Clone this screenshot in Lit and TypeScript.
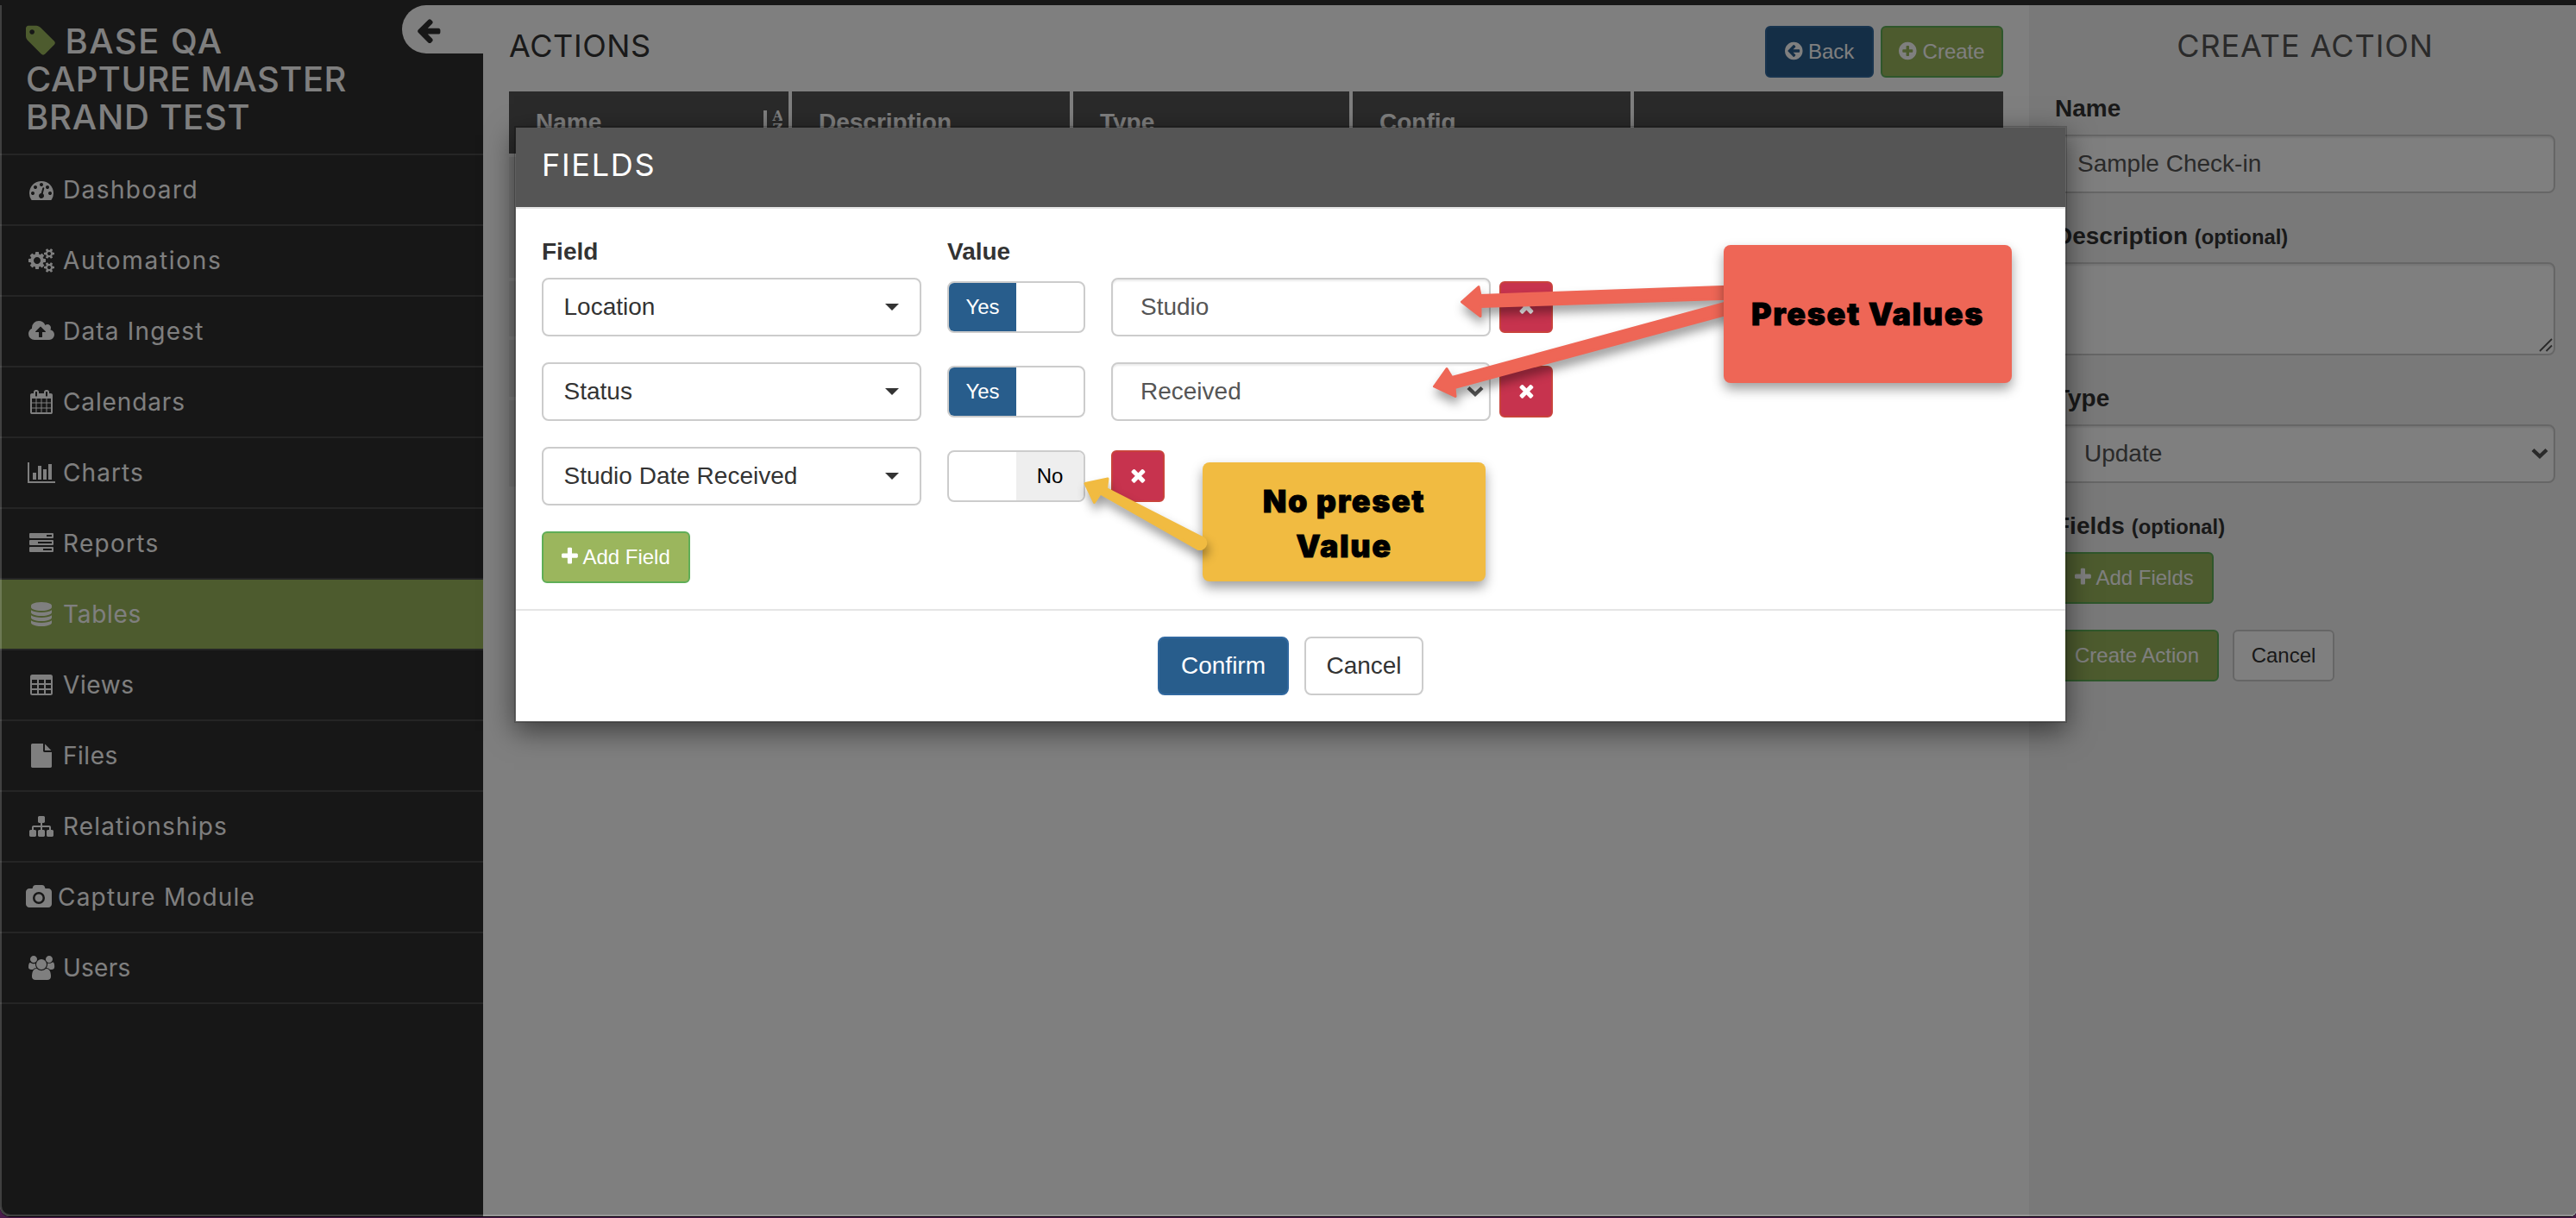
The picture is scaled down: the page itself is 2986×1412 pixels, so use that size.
import { LitElement, html, svg, css, nothing } from 'lit'
import { customElement, property } from 'lit/decorators.js';
import { classMap } from 'lit/directives/class-map.js';

interface Glyph {
  /** left edge and width of the glyph box, height is always 1792 */
  x: number;
  w: number;
  d: string;
}

const GLYPHS: Record<string, Glyph> = {
  tag: { x: 128, w: 1536, d: 'M576 448q0-53-37.5-90.5t-90.5-37.5-90.5 37.5-37.5 90.5 37.5 90.5 90.5 37.5 90.5-37.5 37.5-90.5zm1067 576q0 53-37 90l-491 492q-39 37-91 37-53 0-90-37l-715-716q-38-37-64.5-101t-26.5-117v-416q0-52 38-90t90-38h416q53 0 117 26.5t102 64.5l715 714q37 39 37 91z' },
  dashboard: { x: 0, w: 1792, d: 'M384 1152q0-53-37.5-90.5t-90.5-37.5-90.5 37.5-37.5 90.5 37.5 90.5 90.5 37.5 90.5-37.5 37.5-90.5zm192-448q0-53-37.5-90.5t-90.5-37.5-90.5 37.5-37.5 90.5 37.5 90.5 90.5 37.5 90.5-37.5 37.5-90.5zm428 481l101-382q6-26-7.5-48.5t-38.5-29.5-48 6.5-30 39.5l-101 382q-60 5-107 43.5t-63 98.5q-20 77 20 146t117 89 146-20 89-117q16-60-6-117t-72-91zm660-33q0-53-37.5-90.5t-90.5-37.5-90.5 37.5-37.5 90.5 37.5 90.5 90.5 37.5 90.5-37.5 37.5-90.5zm-640-640q0-53-37.5-90.5t-90.5-37.5-90.5 37.5-37.5 90.5 37.5 90.5 90.5 37.5 90.5-37.5 37.5-90.5zm448 192q0-53-37.5-90.5t-90.5-37.5-90.5 37.5-37.5 90.5 37.5 90.5 90.5 37.5 90.5-37.5 37.5-90.5zm320 448q0 261-141 483-19 29-54 29h-1402q-35 0-54-29-141-221-141-483 0-182 71-348t191-286 286-191 348-71 348 71 286 191 191 286 71 348z' },
  cogs: { x: 0, w: 1920, d: 'M896 896q0-106-75-181t-181-75-181 75-75 181 75 181 181 75 181-75 75-181zm768 512q0-52-38-90t-90-38-90 38-38 90q0 53 37.5 90.5t90.5 37.5 90.5-37.5 37.5-90.5zm0-1024q0-52-38-90t-90-38-90 38-38 90q0 53 37.5 90.5t90.5 37.5 90.5-37.5 37.5-90.5zm-384 421v185q0 10-7 19.5t-16 10.5l-155 24q-11 35-32 76 34 48 90 115 7 11 7 20 0 12-7 19-23 30-82.5 89.5t-78.5 59.5q-11 0-21-7l-115-90q-37 19-77 31-11 108-23 155-7 24-30 24h-186q-11 0-20-7.5t-10-17.5l-23-153q-34-10-75-31l-118 89q-7 7-20 7-11 0-21-8-144-133-144-160 0-9 7-19 10-14 41-53t47-61q-23-44-35-82l-152-24q-10-1-17-9.5t-7-19.5v-185q0-10 7-19.5t16-10.5l155-24q11-35 32-76-34-48-90-115-7-11-7-20 0-12 7-20 22-30 82-89t79-59q11 0 21 7l115 90q34-18 77-32 11-108 23-154 7-24 30-24h186q11 0 20 7.5t10 17.5l23 153q34 10 75 31l118-89q8-7 20-7 11 0 21 8 144 133 144 160 0 8-7 19-12 16-42 54t-45 60q23 48 34 82l152 23q10 2 17 10.5t7 19.5zm640 533v140q0 16-149 31-12 27-30 52 51 113 51 138 0 4-4 7-122 71-124 71-8 0-46-47t-52-68q-20 2-30 2t-30-2q-14 21-52 68t-46 47q-2 0-124-71-4-3-4-7 0-25 51-138-18-25-30-52-149-15-149-31v-140q0-16 149-31 13-29 30-52-51-113-51-138 0-4 4-7 4-2 35-20t59-34 30-16q8 0 46 46.5t52 67.5q20-2 30-2t30 2q51-71 92-112l6-2q4 0 124 70 4 3 4 7 0 25-51 138 17 23 30 52 149 15 149 31zm0-1024v140q0 16-149 31-12 27-30 52 51 113 51 138 0 4-4 7-122 71-124 71-8 0-46-47t-52-68q-20 2-30 2t-30-2q-14 21-52 68t-46 47q-2 0-124-71-4-3-4-7 0-25 51-138-18-25-30-52-149-15-149-31v-140q0-16 149-31 13-29 30-52-51-113-51-138 0-4 4-7 4-2 35-20t59-34 30-16q8 0 46 46.5t52 67.5q20-2 30-2t30 2q51-71 92-112l6-2q4 0 124 70 4 3 4 7 0 25-51 138 17 23 30 52 149 15 149 31z' },
  cloud: { x: 0, w: 1920, d: 'M1280 928q0-14-9-23l-352-352q-9-9-23-9t-23 9l-351 351q-10 12-10 24 0 14 9 23t23 9h224v352q0 13 9.5 22.5t22.5 9.5h192q13 0 22.5-9.5t9.5-22.5v-352h224q13 0 22.5-9.5t9.5-22.5zm640 224q0 159-112.5 271.5t-271.5 112.5h-1088q-185 0-316.5-131.5t-131.5-316.5q0-130 70-240t188-165q-2-30-2-43 0-212 150-362t362-150q156 0 285.5 87t188.5 231q71-62 166-62 106 0 181 75t75 181q0 76-41 138 130 31 213.5 135.5t83.5 238.5z' },
  calendar: { x: 64, w: 1664, d: 'M192 1664h288v-288h-288v288zm352 0h320v-288h-320v288zm-352-352h288v-320h-288v320zm352 0h320v-320h-320v320zm-352-384h288v-288h-288v288zm736 736h320v-288h-320v288zm-384-736h320v-288h-320v288zm768 736h288v-288h-288v288zm-384-352h320v-320h-320v320zm-352-864v-288q0-13-9.5-22.5t-22.5-9.5h-64q-13 0-22.5 9.5t-9.5 22.5v288q0 13 9.5 22.5t22.5 9.5h64q13 0 22.5-9.5t9.5-22.5zm736 864h288v-320h-288v320zm-384-384h320v-288h-320v288zm384 0h288v-288h-288v288zm32-480v-288q0-13-9.5-22.5t-22.5-9.5h-64q-13 0-22.5 9.5t-9.5 22.5v288q0 13 9.5 22.5t22.5 9.5h64q13 0 22.5-9.5t9.5-22.5zm384-64v1280q0 52-38 90t-90 38h-1408q-52 0-90-38t-38-90v-1280q0-52 38-90t90-38h128v-96q0-66 47-113t113-47h64q66 0 113 47t47 113v96h384v-96q0-66 47-113t113-47h64q66 0 113 47t47 113v96h128q52 0 90 38t38 90z' },
  chart: { x: 0, w: 2048, d: 'M640 896v512h-256v-512h256zm384-512v1024h-256v-1024h256zm1024 1152v128h-2048v-1536h128v1408h1920zm-640-896v768h-256v-768h256zm384-384v1152h-256v-1152h256z' },
  tasks: { x: 0, w: 1792, d: 'M1280 384h384v-128h-384zM640 896h1024v-128h-1024zM1024 1408h640v-128h-640zM64 128h1664q64 0 64 64v256q0 64-64 64h-1664q-64 0-64-64v-256q0-64 64-64zM64 640h1664q64 0 64 64v256q0 64-64 64h-1664q-64 0-64-64v-256q0-64 64-64zM64 1152h1664q64 0 64 64v256q0 64-64 64h-1664q-64 0-64-64v-256q0-64 64-64z' },
  database: { x: 128, w: 1536, d: 'M896 768q237 0 443-43t325-127v170q0 69-103 128t-280 93.5-385 34.5-385-34.5-280-93.5-103-128v-170q119 84 325 127t443 43zm0 768q237 0 443-43t325-127v170q0 69-103 128t-280 93.5-385 34.5-385-34.5-280-93.5-103-128v-170q119 84 325 127t443 43zm0-384q237 0 443-43t325-127v170q0 69-103 128t-280 93.5-385 34.5-385-34.5-280-93.5-103-128v-170q119 84 325 127t443 43zm0-1152q208 0 385 34.5t280 93.5 103 128v128q0 69-103 128t-280 93.5-385 34.5-385-34.5-280-93.5-103-128v-128q0-69 103-128t280-93.5 385-34.5z' },
  table: { x: 64, w: 1664, d: 'M192 512h384v256h-384zM704 512h384v256h-384zM1216 512h384v256h-384zM192 896h384v256h-384zM704 896h384v256h-384zM1216 896h384v256h-384zM192 1280h384v256h-384zM704 1280h384v256h-384zM1216 1280h384v256h-384zM224 128h1344q160 0 160 160v1216q0 160-160 160h-1344q-160 0-160-160v-1216q0-160 160-160z' },
  file: { x: 128, w: 1536, d: 'M1152 512v-472q22 14 36 28l408 408q14 14 28 36h-472zm-128 32q0 40 28 68t68 28h544v1056q0 40-28 68t-68 28h-1344q-40 0-68-28t-28-68v-1600q0-40 28-68t68-28h800v544z' },
  sitemap: { x: 0, w: 1792, d: 'M1792 1248v320q0 40-28 68t-68 28h-320q-40 0-68-28t-28-68v-320q0-40 28-68t68-28h96v-192h-512v192h96q40 0 68 28t28 68v320q0 40-28 68t-68 28h-320q-40 0-68-28t-28-68v-320q0-40 28-68t68-28h96v-192h-512v192h96q40 0 68 28t28 68v320q0 40-28 68t-68 28h-320q-40 0-68-28t-28-68v-320q0-40 28-68t68-28h96v-192q0-52 38-90t90-38h512v-192h-96q-40 0-68-28t-28-68v-320q0-40 28-68t68-28h320q40 0 68 28t28 68v320q0 40-28 68t-68 28h-96v192h512q52 0 90 38t38 90v192h96q40 0 68 28t28 68z' },
  camera: { x: 0, w: 1920, d: 'M960 672q119 0 203.5 84.5t84.5 203.5-84.5 203.5-203.5 84.5-203.5-84.5-84.5-203.5 84.5-203.5 203.5-84.5zm704-416q106 0 181 75t75 181v896q0 106-75 181t-181 75h-1408q-106 0-181-75t-75-181v-896q0-106 75-181t181-75h224l51-136q19-49 69.5-84.5t103.5-35.5h512q53 0 103.5 35.5t69.5 84.5l51 136h224zm-704 1152q185 0 316.5-131.5t131.5-316.5-131.5-316.5-316.5-131.5-316.5 131.5-131.5 316.5 131.5 316.5 316.5 131.5z' },
  users: { x: 0, w: 1920, d: 'M593 896q-162 5-265 128h-134q-82 0-138-40.5t-56-118.5q0-353 124-353 6 0 43.5 21t97.5 42.5 119 21.5q67 0 133-23-5 37-5 66 0 159 93 293zm1071 637q0 120-73 189.5t-194 69.5h-874q-121 0-194-69.5t-73-189.5q0-53 3.5-103.5t14-109 26.5-108.5 43-97.5 62-81 85.5-53.5 111.5-20q10 0 43 21.5t73 48 107 48 135 21.5 135-21.5 107-48 73-48 43-21.5q61 0 111.5 20t85.5 53.5 62 81 43 97.5 26.5 108.5 14 109 3.5 103.5zm-1024-1277q0 106-75 181t-181 75-181-75-75-181 75-181 181-75 181 75 75 181zm704 384q0 159-112.5 271.5t-271.5 112.5-271.5-112.5-112.5-271.5 112.5-271.5 271.5-112.5 271.5 112.5 112.5 271.5zm576 225q0 78-56 118.5t-138 40.5h-134q-103-123-265-128 93-134 93-293 0-29-5-66 66 23 133 23 59 0 119-21.5t97.5-42.5 43.5-21q124 0 124 353zm-128-609q0 106-75 181t-181 75-181-75-75-181 75-181 181-75 181 75 75 181z' },
  arrowLeft: { x: 128, w: 1536, d: 'M1664 896v128q0 53-32.5 90.5t-84.5 37.5h-704l293 294q38 36 38 90t-38 90l-75 76q-37 37-90 37-52 0-91-37l-651-652q-37-37-37-90 0-52 37-91l651-650q38-38 91-38 52 0 90 38l75 74q38 38 38 91t-38 91l-293 293h704q52 0 84.5 37.5t32.5 90.5z' },
  plus: { x: 192, w: 1408, d: 'M1600 736v192q0 40-28 68t-68 28h-416v416q0 40-28 68t-68 28h-192q-40 0-68-28t-28-68v-416h-416q-40 0-68-28t-28-68v-192q0-40 28-68t68-28h416v-416q0-40 28-68t68-28h192q40 0 68 28t28 68v416h416q40 0 68 28t28 68z' },
  times: { x: 192, w: 1408, d: 'M1490 1322q0 40-28 68l-136 136q-28 28-68 28t-68-28l-294-294-294 294q-28 28-68 28t-68-28l-136-136q-28-28-28-68t28-68l294-294-294-294q-28-28-28-68t28-68l136-136q28-28 68-28t68 28l294 294 294-294q28-28 68-28t68 28l136 136q28 28 28 68t-28 68l-294 294 294 294q28 28 28 68z' },
  circleLeft: { x: 128, w: 1536, d: 'M1408 960v-128q0-26-19-45t-45-19h-502l189-189q19-19 19-45t-19-45l-91-91q-18-18-45-18t-45 18l-362 362-91 91q-18 18-18 45t18 45l91 91 362 362q18 18 45 18t45-18l91-91q18-18 18-45t-18-45l-189-189h502q26 0 45-19t19-45zm256-64q0 209-103 385.5t-279.5 279.5-385.5 103-385.5-103-279.5-279.5-103-385.5 103-385.5 279.5-279.5 385.5-103 385.5 103 279.5 279.5 103 385.5z' },
  circlePlus: { x: 128, w: 1536, d: 'M1344 960v-128q0-26-19-45t-45-19h-256v-256q0-26-19-45t-45-19h-128q-26 0-45 19t-19 45v256h-256q-26 0-45 19t-19 45v128q0 26 19 45t45 19h256v256q0 26 19 45t45 19h128q26 0 45-19t19-45v-256h256q26 0 45-19t19-45zm320-64q0 209-103 385.5t-279.5 279.5-385.5 103-385.5-103-279.5-279.5-103-385.5 103-385.5 279.5-279.5 385.5-103 385.5 103 279.5 279.5 103 385.5z' },
};

/**
 * @element ui-icon
 * @summary One glyph from the icon set, sized by the surrounding font.
 */
@customElement('ui-icon')
export class UiIcon extends LitElement {
  @property({ type: String }) name = 'tag';

  static override styles = css`
    :host {
      display: inline-block;
      height: 1em;
      line-height: 0;
      vertical-align: -0.143em;
    }
    svg {
      display: block;
      height: 1em;
      width: auto;
      overflow: visible;
    }
  `;

  override render() {
    const g = GLYPHS[this.name];
    return html`
      <svg viewBox=${`${g.x} 0 ${g.w} 1792`} fill="currentColor" fill-rule="evenodd" aria-hidden="true">
        <path d=${g.d}></path>
      </svg>
    `;
  }
}

/**
 * @element ui-button
 * @summary Button with an optional leading icon. The host sets the width.
 */
@customElement('ui-button')
export class UiButton extends LitElement {
  @property({ type: String }) variant = 'default';
  @property({ type: String }) size = 'sm';
  @property({ type: String }) icon = '';

  static override styles = css`
    :host {
      display: block;
    }
    button {
      display: block;
      box-sizing: border-box;
      width: 100%;
      height: 60px;
      margin: 0;
      padding: 0;
      border: 2px solid #ccc;
      border-radius: 6px;
      background: #fff;
      color: #333;
      font: 24px/36px 'Liberation Sans', Arial, sans-serif;
      white-space: nowrap;
    }

    .size-md {
      height: 68px;
      border-radius: 8px;
      font-size: 28px;
    }

    /* ── Variants ── */
    .variant-primary {
      background: #285d8c;
      border-color: #31689f;
      color: #fff;
    }
    .variant-success {
      background: #9bb65d;
      border-color: #5fae57;
      color: #fff;
    }
    .variant-danger {
      background: #c7334e;
      border-color: #c9433c;
      color: #fff;
    }
  `;

  override render() {
    return html`
      <button class=${`variant-${this.variant} size-${this.size}`}>
        ${this.icon ? html`<ui-icon name=${this.icon}></ui-icon>` : nothing}
        <slot></slot>
      </button>
    `;
  }
}

/**
 * @element ui-toggle
 * @summary Two-state Yes / No switch.
 */
@customElement('ui-toggle')
export class UiToggle extends LitElement {
  @property({ type: Boolean }) on = false;

  static override styles = css`
    :host {
      display: flex;
      box-sizing: border-box;
      width: 160px;
      height: 60px;
      border: 2px solid #ccc;
      border-radius: 8px;
      overflow: hidden;
      background: #fff;
      font: 24px/56px 'Liberation Sans', Arial, sans-serif;
      text-align: center;
    }
    span {
      width: 50%;
    }
    .yes {
      background: #285d8c;
      color: #fff;
    }
    .no {
      background: #eee;
      color: #000;
    }
  `;

  override render() {
    return this.on
      ? html`<span class="yes">Yes</span><span></span>`
      : html`<span></span><span class="no">No</span>`;
  }
}

interface NavItem {
  label: string;
  icon: string;
  /** letter spacing of the label, px */
  track: number;
  active?: boolean;
  tight?: boolean;
}

const NAV: NavItem[] = [
  { label: 'Dashboard', icon: 'dashboard', track: 1.4 },
  { label: 'Automations', icon: 'cogs', track: 1.7 },
  { label: 'Data Ingest', icon: 'cloud', track: 1.2 },
  { label: 'Calendars', icon: 'calendar', track: 0.88 },
  { label: 'Charts', icon: 'chart', track: 1.1 },
  { label: 'Reports', icon: 'tasks', track: 1.3 },
  { label: 'Tables', icon: 'database', track: 0.7, active: true },
  { label: 'Views', icon: 'table', track: 0.6 },
  { label: 'Files', icon: 'file', track: 0.52 },
  { label: 'Relationships', icon: 'sitemap', track: 1.17 },
  { label: 'Capture Module', icon: 'camera', track: 1.2, tight: true },
  { label: 'Users', icon: 'users', track: 0.23 },
];

interface FieldRow {
  field: string;
  preset: boolean;
  value?: string;
  select?: boolean;
}

const FIELDS: FieldRow[] = [
  { field: 'Location', preset: true, value: 'Studio' },
  { field: 'Status', preset: true, value: 'Received', select: true },
  { field: 'Studio Date Received', preset: false },
];

const chevron = svg`<path d="M2 2.5 L10 10 L18 2.5" fill="none" stroke="currentColor" stroke-width="4.4"></path>`;

@customElement('app-root')
export class AppRoot extends LitElement {
  static override styles = css`
    :host {
      display: block;
      position: relative;
      width: 2986px;
      height: 1412px;
      overflow: hidden;
      background: #4b1b4b;
      color: #333;
      font: 28px/40px 'Liberation Sans', Arial, sans-serif;
    }

    .window {
      position: relative;
      display: flex;
      box-sizing: border-box;
      height: 1410px;
      border-top: 6px solid #171717;
      border-radius: 0 0 6px 12px;
      overflow: hidden;
      background: #fff;
    }
    .floor {
      height: 1411px;
      background: #0d030d;
      border-radius: 0 0 6px 12px;
    }

    /* ── Sidebar ── */
    .sidebar {
      position: relative;
      flex: none;
      width: 560px;
      background: #2e2e2e;
      color: #fff;
      font-family: Inter, sans-serif;
    }
    .brand {
      box-sizing: border-box;
      height: 174px;
      padding: 19.5px 0 0 30px;
      border-bottom: 2px solid #4a4a4a;
      font-size: 40px;
      line-height: 44px;
      font-weight: 500;
      letter-spacing: 0.45px;
      margin: 0;
    }
    .brand ui-icon {
      color: #9bb65d;
    }
    .brand .wide {
      letter-spacing: 1.5px;
    }
    .brand .mid {
      letter-spacing: 0.8px;
    }
    .nav-item {
      display: flex;
      align-items: center;
      gap: 7px;
      height: 80px;
      padding-left: 30px;
      border-bottom: 2px solid #4a4a4a;
      line-height: 80px;
    }
    .nav-item.active {
      background: #9bb65d;
    }
    .nav-icon {
      display: flex;
      justify-content: center;
      width: 36px;
      line-height: 0;
    }
    .nav-item.tight .nav-icon {
      width: 30px;
    }
    .collapse {
      position: absolute;
      top: 0;
      right: 0;
      display: flex;
      box-sizing: border-box;
      width: 94px;
      height: 56px;
      padding: 13px 0 0 17px;
      border-radius: 28px 0 0 28px;
      background: #fff;
      color: #2e2e2e;
      font-size: 32px;
    }

    /* ── Main ── */
    main {
      flex: 1;
      padding: 0 30px;
    }
    .page-head {
      display: flex;
      justify-content: space-between;
      height: 100px;
    }
    h1 {
      margin: 27px 0 0;
      font: 400 36px/40px Inter, sans-serif;
      letter-spacing: 0.6px;
    }
    .page-actions {
      display: grid;
      grid-template-columns: 126px 142px;
      gap: 8px;
      padding-top: 24px;
    }
    .thead {
      display: grid;
      grid-template-columns: 324px 322px 320px 322px 1fr;
      column-gap: 4px;
      height: 72px;
      font-weight: bold;
    }
    .thead > div {
      display: flex;
      justify-content: space-between;
      padding: 16px 7px 0 31px;
      background: #555;
      color: #fff;
    }
    .thead svg {
      margin-top: 4px;
    }
    .tbody {
      display: grid;
      grid-template-rows: 140px 64px 66px 100px 140px;
      row-gap: 4px;
      padding-top: 4px;
    }
    .tbody div {
      background: #eee;
    }
    .tbody div:last-child {
      background: #fafafa;
    }

    /* ── Form controls ── */
    .label {
      margin-bottom: 10px;
      font-weight: bold;
      color: #333;
    }
    .label small {
      font-size: 23.8px;
      line-height: 1;
    }
    .control {
      display: flex;
      align-items: center;
      box-sizing: border-box;
      height: 68px;
      padding: 0 24px;
      border: 2px solid #ccc;
      border-radius: 8px;
      background: #fff;
      color: #555;
      box-shadow: inset 0 2px 2px rgba(0, 0, 0, 0.075);
    }
    .control.select {
      justify-content: space-between;
      padding: 0 6px 0 32px;
    }
    .control.area {
      position: relative;
      height: 108px;
    }
    .area svg {
      position: absolute;
      right: 1px;
      bottom: 2px;
    }

    /* ── Right panel ── */
    aside {
      box-sizing: border-box;
      width: 634px;
      padding: 0 24px 0 30px;
      background: #f3f3f3;
    }
    aside h2 {
      box-sizing: border-box;
      height: 100px;
      margin: 0;
      padding: 27px 0 0 0;
      font: 400 36px/40px Inter, sans-serif;
      letter-spacing: 0.95px;
      text-align: center;
      color: #555;
    }
    .form {
      display: flex;
      flex-direction: column;
      gap: 30px;
    }
    .form .add {
      width: 184px;
    }
    .form-actions {
      display: grid;
      grid-template-columns: 190px 118px;
      gap: 16px;
    }

    /* ── Modal ── */
    .backdrop {
      position: absolute;
      inset: 0;
      background: rgba(0, 0, 0, 0.5);
    }
    /* light rim of the browser window */
    .edge {
      position: absolute;
      inset: -6px 0 0 0;
      border-left: 2px solid rgba(255, 255, 255, 0.18);
      border-bottom: 2px solid rgba(255, 255, 255, 0.18);
      border-radius: 0 0 6px 12px;
    }
    .modal {
      position: absolute;
      top: 146px;
      left: 596px;
      width: 1796px;
      border: 2px solid rgba(0, 0, 0, 0.2);
      background: #fff;
      background-clip: padding-box;
      box-shadow: 0 10px 30px rgba(0, 0, 0, 0.5);
    }
    .modal-head {
      height: 92px;
      padding-left: 30px;
      border-bottom: 2px solid #e5e5e5;
      background: #555;
      background-clip: padding-box;
      color: #fff;
      font: 400 36px/86px Inter, sans-serif;
      letter-spacing: 1.7px;
    }
    .modal-body {
      display: grid;
      grid-template-columns: 440px 1fr;
      column-gap: 30px;
      row-gap: 30px;
      padding: 30px;
    }
    .modal-body .label {
      margin-bottom: -20px;
    }
    .modal-body .add {
      width: 172px;
    }
    .picker {
      justify-content: space-between;
      padding: 0 24px 0 23.5px;
      color: #333;
      box-shadow: none;
    }
    .value {
      display: flex;
      align-items: center;
      height: 68px;
    }
    .value ui-toggle {
      margin-right: 30px;
    }
    .value ui-button {
      width: 62px;
    }
    .value .control {
      width: 440px;
      margin-right: 10px;
    }
    .value .control.text {
      padding-left: 32px;
    }
    .modal-foot {
      display: grid;
      grid-template-columns: 152px 138px;
      justify-content: center;
      gap: 18px;
      padding: 30px;
      border-top: 2px solid #e5e5e5;
    }

    /* ── Callouts ── */
    .arrows {
      position: absolute;
      top: 0;
      left: 0;
      filter: drop-shadow(2px 8px 6px rgba(0, 0, 0, 0.38));
    }
    .callout {
      position: absolute;
      display: flex;
      align-items: center;
      justify-content: center;
      box-sizing: border-box;
      border-radius: 8px;
      box-shadow: 0 7px 14px rgba(0, 0, 0, 0.38);
      color: #000;
      font: 900 36px/52px Inter, 'Arial Black', sans-serif;
      letter-spacing: 1.6px;
      -webkit-text-stroke: 0.8px #000;
      text-align: center;
    }
    .callout.red {
      top: 284px;
      left: 1998px;
      width: 334px;
      height: 160px;
      background: #ee6656;
    }
    .callout.yellow {
      top: 536px;
      left: 1394px;
      width: 328px;
      height: 138px;
      padding-top: 3px;
      background: #f1bb41;
    }
  `;

  private _renderNav() {
    return NAV.map((item) => html`
      <div class=${classMap({ 'nav-item': true, active: !!item.active, tight: !!item.tight })}>
        <span class="nav-icon"><ui-icon name=${item.icon}></ui-icon></span>
        <span style=${`letter-spacing:${item.track}px`}>${item.label}</span>
      </div>
    `);
  }

  private _renderField(row: FieldRow) {
    return html`
      <div class="control picker">
        ${row.field}
        <svg width="16" height="8"><path d="M0 0h16l-8 8z" fill="#333"></path></svg>
      </div>
      <div class="value">
        <ui-toggle ?on=${row.preset}></ui-toggle>
        ${row.value
          ? html`<div class="control ${row.select ? 'select' : 'text'}">
              ${row.value}
              ${row.select ? html`<svg width="20" height="14">${chevron}</svg>` : nothing}
            </div>`
          : nothing}
        <ui-button variant="danger" icon="times"></ui-button>
      </div>
    `;
  }

  override render() {
    return html`
      <div class="floor">
        <div class="window">
          <nav class="sidebar">
            <h2 class="brand">
              <ui-icon name="tag"></ui-icon> <span class="wide">BASE QA</span><br />CAPTURE MASTER<br /><span class="mid">BRAND TEST</span>
            </h2>
            ${this._renderNav()}
            <div class="collapse"><ui-icon name="arrowLeft"></ui-icon></div>
          </nav>

          <main>
            <div class="page-head">
              <h1>ACTIONS</h1>
              <div class="page-actions">
                <ui-button variant="primary" icon="circleLeft">Back</ui-button>
                <ui-button variant="success" icon="circlePlus">Create</ui-button>
              </div>
            </div>
            <div class="thead">
              <div>
                Name
                <svg width="22" height="32" fill="#fff" font-family="DejaVu Serif, serif" font-size="16">
                  <rect x="0" y="2" width="4" height="28"></rect>
                  <text x="10.5" y="14">A</text>
                  <text x="10.5" y="29">Z</text>
                </svg>
              </div>
              <div>Description</div>
              <div>Type</div>
              <div>Config</div>
              <div></div>
            </div>
            <div class="tbody"><div></div><div></div><div></div><div></div><div></div></div>
          </main>

          <aside>
            <h2>CREATE ACTION</h2>
            <div class="form">
              <div>
                <div class="label">Name</div>
                <div class="control">Sample Check-in</div>
              </div>
              <div>
                <div class="label">Description <small>(optional)</small></div>
                <div class="control area">
                  <svg width="16" height="16" stroke="#555" stroke-width="1.8">
                    <path d="M1 15 L15 1 M8.5 15 L15 8.5"></path>
                  </svg>
                </div>
              </div>
              <div>
                <div class="label">Type</div>
                <div class="control select">
                  Update
                  <svg width="20" height="14">${chevron}</svg>
                </div>
              </div>
              <div>
                <div class="label">Fields <small>(optional)</small></div>
                <ui-button class="add" variant="success" icon="plus">Add Fields</ui-button>
              </div>
              <div class="form-actions">
                <ui-button variant="success">Create Action</ui-button>
                <ui-button>Cancel</ui-button>
              </div>
            </div>
          </aside>

          <div class="backdrop"></div>
          <div class="edge"></div>
        </div>
      </div>

      <section class="modal" role="dialog">
        <div class="modal-head">FIELDS</div>
        <div class="modal-body">
          <div class="label">Field</div>
          <div class="label">Value</div>
          ${FIELDS.map((row) => this._renderField(row))}
          <ui-button class="add" variant="success" icon="plus">Add Field</ui-button>
        </div>
        <div class="modal-foot">
          <ui-button variant="primary" size="md">Confirm</ui-button>
          <ui-button size="md">Cancel</ui-button>
        </div>
      </section>

      <svg class="arrows" width="2400" height="700" fill="#ee6656" stroke="#ee6656" stroke-width="3" stroke-linejoin="round">
        <path d="M1694.5 350 L1714 332.500 L1716 342.500 L2010 332 V346 L1716 355.500 L1716 366.500 Z"></path>
        <path d="M1662.500 448 L1677 427.500 L1683 437.500 L2010 348.500 V362 L1686 449.500 L1687 459.500 Z"></path>
      </svg>
      <div class="callout red">Preset Values</div>
      <div class="callout yellow">No preset<br />Value</div>
      <svg class="arrows" width="2400" height="700" fill="#f1bb41" stroke="#f1bb41" stroke-width="3" stroke-linejoin="round">
        <path d="M1258 560.500 L1284 555 L1282.500 566.500 L1395 624 A7 7 0 0 1 1388 636 L1275.500 572 L1268.500 582.500 Z"></path>
      </svg>
    `;
  }
}
